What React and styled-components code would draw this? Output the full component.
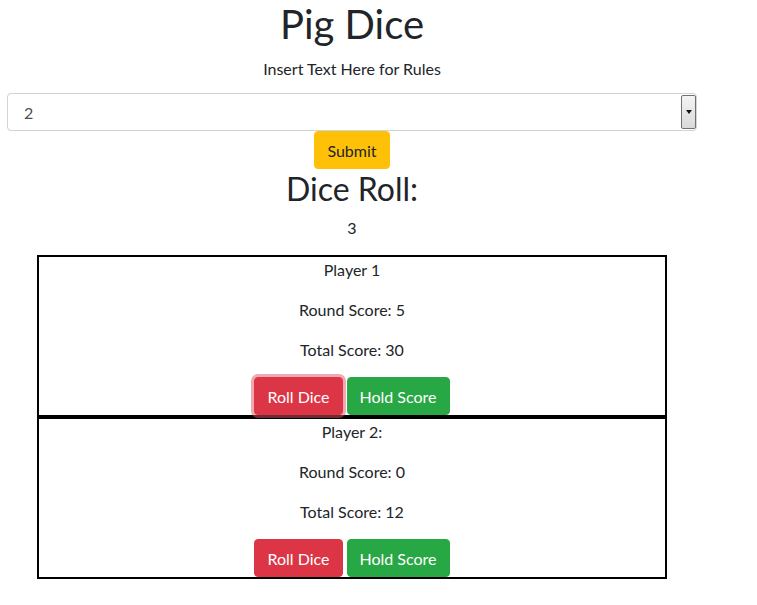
import React from 'react';
import styled, { createGlobalStyle } from 'styled-components';

const GlobalStyle = createGlobalStyle`
    *, *::before, *::after {
        box-sizing: border-box;
    }
    body {
        margin: 0;
        background: #fff;
        color: #212529;
        font-family: Lato, "Noto Sans", sans-serif;
        font-size: 16px;
        line-height: 1.5;
    }
`;

const Page = styled.div`
    width: 690px;
    margin-left: 7px;
    text-align: center;
`;

const Title = styled.h1`
    margin: 0 0 8px;
    font-size: 40px;
    font-weight: 400;
    line-height: 48px;
`;

const Rules = styled.p`
    margin: 0 0 13px;
    padding-top: 1px;
    line-height: 23px;
    height: 24px;
`;

const SelectWrap = styled.div`
    position: relative;
    height: 38px;
`;

const Select = styled.select`
    appearance: none;
    width: 100%;
    height: 38px;
    padding: 1px 12px 0 16px;
    border: 1px solid #ced4da;
    border-radius: 4px;
    background: #fff;
    color: #495057;
    font: inherit;
`;

const Arrow = styled.span`
    position: absolute;
    top: 2px;
    right: 1px;
    width: 15px;
    height: 34px;
    border: 1px solid #707070;
    border-radius: 2px;
    background: linear-gradient(#f4f4f4, #d9d9d9);
    display: flex;
    align-items: center;
    justify-content: center;
    pointer-events: none;
    &::after {
        content: '';
        border-left: 3px solid transparent;
        border-right: 3px solid transparent;
        border-top: 4px solid #111;
    }
`;

const Button = styled.button`
    display: inline-block;
    height: 38px;
    padding: 2px 12px 0;
    border: 1px solid ${props => props.bg};
    border-radius: 4px;
    background: ${props => props.bg};
    color: ${props => props.fg || '#fff'};
    font: inherit;
    line-height: 24px;
    vertical-align: top;
    box-shadow: ${props => props.focus ? '0 0 0 3px rgba(225, 83, 97, 0.5)' : 'none'};
`;

const SubTitle = styled.h2`
    margin: 0 0 8px;
    padding-top: 1px;
    height: 38px;
    font-size: 32px;
    font-weight: 400;
    line-height: 37px;
`;

const Roll = styled.p`
    margin: 0 0 16px;
    padding-top: 1px;
    height: 24px;
    line-height: 23px;
`;

const Boards = styled.div`
    width: 630px;
    margin: 0 auto;
`;

const Board = styled.div`
    border: 2px solid #000;
`;

const Line = styled.p`
    margin: 0 0 16px;
    padding-top: 1px;
    height: 24px;
    line-height: 23px;
`;

const Actions = styled.div`
    display: flex;
    justify-content: center;
    gap: 4px;
`;

const players = [
    { name: 'Player 1', round: 5, total: 30, focus: true },
    { name: 'Player 2:', round: 0, total: 12 },
];

const PlayerBoard = ({ name, round, total, focus }) => (
    <Board>
        <Line>{name}</Line>
        <Line>Round Score: {round}</Line>
        <Line>Total Score: {total}</Line>
        <Actions>
            <Button bg="#dc3545" focus={focus}>Roll Dice</Button>
            <Button bg="#28a745">Hold Score</Button>
        </Actions>
    </Board>
);

export default function App() {
    return (
        <Page>
            <GlobalStyle />
            <Title>Pig Dice</Title>
            <Rules>Insert Text Here for Rules</Rules>
            <SelectWrap>
                <Select defaultValue="2">
                    <option>1</option>
                    <option>2</option>
                    <option>3</option>
                </Select>
                <Arrow />
            </SelectWrap>
            <Button bg="#ffc107" fg="#212529">Submit</Button>
            <SubTitle>Dice Roll:</SubTitle>
            <Roll>3</Roll>
            <Boards>
                {players.map(p => (
                    <PlayerBoard key={p.name} {...p} />
                ))}
            </Boards>
        </Page>
    );
}
